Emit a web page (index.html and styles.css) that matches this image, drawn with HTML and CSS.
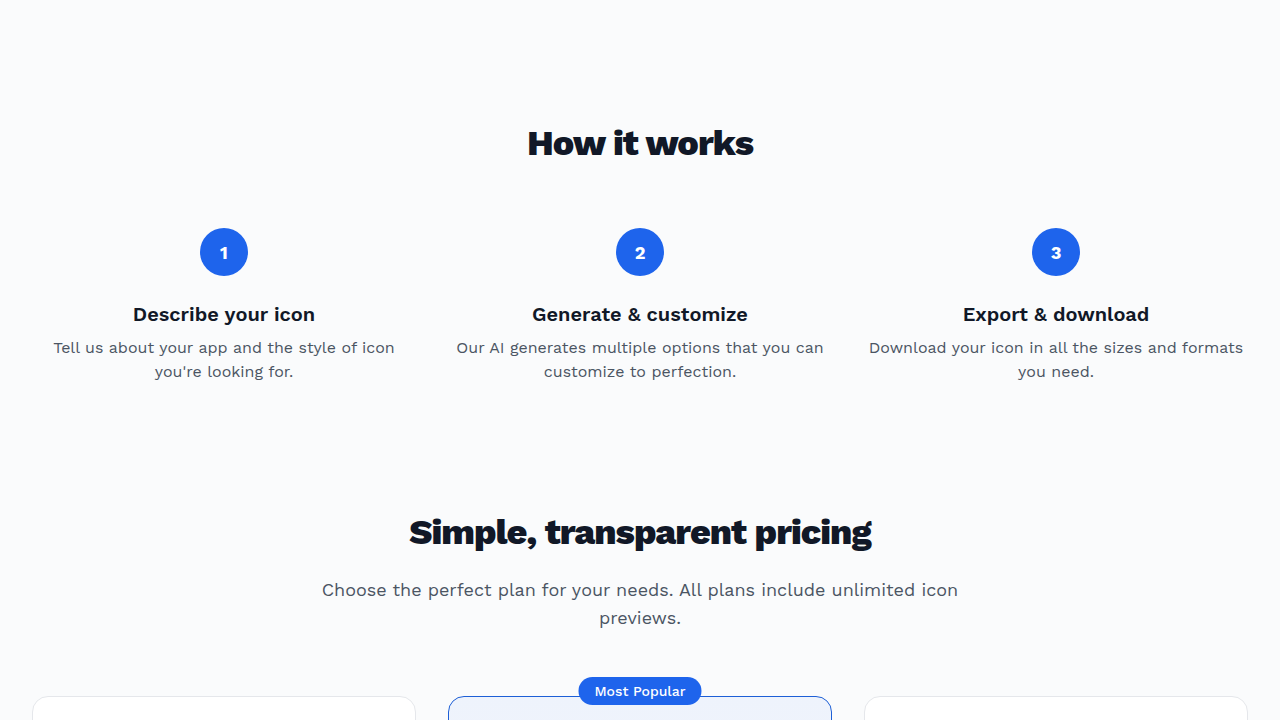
FILE: index.html
```html
<!DOCTYPE html>
<html lang="en">
<head>
<meta charset="utf-8">
<title>How it works</title>
<link rel="stylesheet" href="styles.css">
</head>
<body>
<main class="page">
  <section class="how">
    <h2 class="section-title">How it works</h2>
    <div class="steps">
      <div class="step">
        <div class="step-num">1</div>
        <h3 class="step-title">Describe your icon</h3>
        <p class="step-text">Tell us about your app and the style of icon you're looking for.</p>
      </div>
      <div class="step">
        <div class="step-num">2</div>
        <h3 class="step-title">Generate &amp; customize</h3>
        <p class="step-text">Our AI generates multiple options that you can customize to perfection.</p>
      </div>
      <div class="step">
        <div class="step-num">3</div>
        <h3 class="step-title">Export &amp; download</h3>
        <p class="step-text">Download your icon in all the sizes and formats you need.</p>
      </div>
    </div>
  </section>
  <section class="pricing">
    <h2 class="section-title">Simple, transparent pricing</h2>
    <p class="pricing-sub">Choose the perfect plan for your needs. All plans include unlimited icon previews.</p>
    <div class="plans">
      <div class="plan"></div>
      <div class="plan plan-popular"><span class="badge">Most Popular</span></div>
      <div class="plan"></div>
    </div>
  </section>
</main>
</body>
</html>
```

FILE: styles.css
```css
* { box-sizing: border-box; }
html, body { margin: 0; padding: 0; }
body {
  background: #fafbfc;
  font-family: "Work Sans", Inter, "Noto Sans", sans-serif;
  color: #111827;
  overflow: hidden;
  height: 720px;
}
.page { padding: 0 32px; }
.how { padding-top: 123px; }
.section-title {
  margin: 0;
  text-align: center;
  font-size: 36px;
  line-height: 40px;
  font-weight: 800;
  letter-spacing: -1px;
  color: #111827;
}
.steps {
  display: grid;
  grid-template-columns: repeat(3, 1fr);
  gap: 32px;
  margin-top: 65px;
}
.step { display: flex; flex-direction: column; align-items: center; text-align: center; }
.step-num {
  width: 48px; height: 48px;
  border-radius: 50%;
  background: #1e64ec;
  color: #fff;
  display: flex; align-items: center; justify-content: center;
  font-size: 18px; font-weight: 700;
}
.step-title {
  margin: 24px 0 0;
  font-size: 20px; line-height: 28px; font-weight: 600;
  color: #111827;
}
.step-text {
  margin: 8px 0 0;
  font-size: 16px; line-height: 24px;
  color: #4b5563;
}
.pricing { padding-top: 128px; text-align: center; }
.pricing-sub {
  margin: 24px auto 0;
  max-width: 672px;
  font-size: 18px; line-height: 28px;
  color: #4b5563;
}
.plans {
  display: grid;
  grid-template-columns: repeat(3, 1fr);
  gap: 32px;
  margin-top: 64px;
}
.plan {
  position: relative;
  height: 200px;
  background: #fff;
  border: 1px solid #e5e7eb;
  border-radius: 16px;
}
.plan-popular {
  background: linear-gradient(180deg, #eef3fc, #f3f6fb);
  border-color: #1d5fd6;
}
.badge {
  position: absolute;
  top: -20px; left: 50%;
  transform: translateX(-50%);
  background: #1e64ec;
  color: #fff;
  font-size: 14px; line-height: 20px; font-weight: 500;
  padding: 4px 16px;
  border-radius: 999px;
  white-space: nowrap;
}
```
